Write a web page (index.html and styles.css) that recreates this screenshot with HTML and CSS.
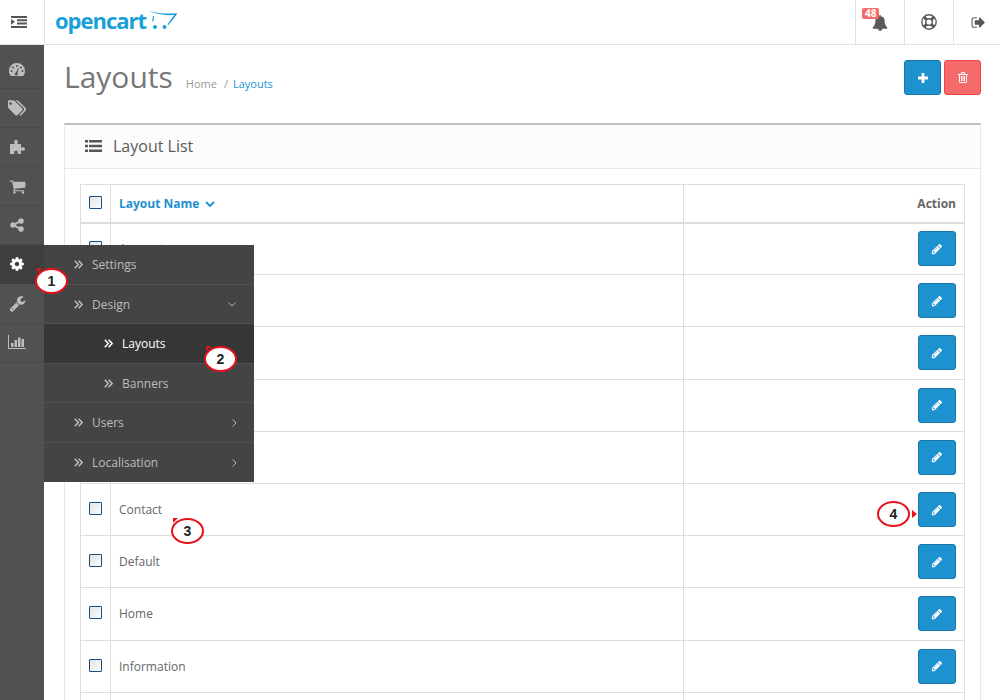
FILE: index.html
```html
<!DOCTYPE html>
<html lang="en">
<head>
<meta charset="utf-8">
<title>Layouts</title>
<link rel="stylesheet" href="styles.css">
</head>
<body>
<svg class="defs" width="0" height="0" aria-hidden="true">
  <symbol id="i-chev2" viewBox="0 0 9 9"><path d="M.8.800 4.300 4.500.8 8.200M4.600.800 8.100 4.500 4.600 8.200" fill="none" stroke="currentColor" stroke-width="1.500"/></symbol>
  <symbol id="i-pencil" viewBox="0 0 1792 1792"><path fill="currentColor" d="M491 1536l91-91-235-235-91 91v107h128v128h107zm523-928q0-22-22-22-10 0-17 7l-542 542q-7 7-7 17 0 22 22 22 10 0 17-7l542-542q7-7 7-17zm-54-192l416 416-832 832h-416v-416zm683 96q0 53-37 90l-166 166-416-416 166-165q36-38 90-38 53 0 91 38l235 234q37 39 37 91z"/></symbol>
</svg>

<header class="topbar">
  <button class="menu-toggle" aria-label="Toggle menu">
    <svg viewBox="0 0 16 12" width="16" height="12"><path fill="#555" d="M0 0h16v2H0zM6 3.300h10v2H6zM6 6.600h10v2H6zM0 10h16v2H0zM0 3l4 2.800L0 8.800z"/></svg>
  </button>
  <a class="logo">
    <span class="logo-text">opencart</span>
    <svg class="logo-cart" viewBox="0 0 28 19" width="28" height="19"><path fill="#1a9fd9" d="M0 0c8 2.200 17 3 27.500 2.300l.5 1L19.500 14l-1-.6 6.600-9.300C16 4.600 7 3 0 0z"/><path stroke="#1a9fd9" stroke-width="1.200" d="M4.500 5l-.7 5.500"/><circle cx="6" cy="16" r="2" fill="#1a9fd9"/><circle cx="15.500" cy="16" r="2" fill="#1a9fd9"/></svg>
  </a>
  <nav class="top-actions">
    <a class="top-action">
      <span class="badge">48</span>
      <svg viewBox="0 0 1792 1792" width="16" height="16"><path fill="#5a5a5a" d="M912 1696q0-16-16-16-59 0-101.500-42.500t-42.500-101.500q0-16-16-16t-16 16q0 73 51.500 124.500t124.500 51.500q16 0 16-16zm816-288q0 52-38 90t-90 38h-448q0 106-75 181t-181 75-181-75-75-181h-448q-52 0-90-38t-38-90q50-42 91-88t85-119.500 74.500-158.500 50-206 19.500-260q0-152 117-282.500t307-158.500q-8-19-8-39 0-40 28-68t68-28 68 28 28 68q0 20-8 39 190 28 307 158.500t117 282.500q0 139 19.500 260t50 206 74.500 158.500 85 119.500 91 88z"/></svg>
    </a>
    <a class="top-action">
      <svg viewBox="0 0 16 16" width="16" height="16"><circle cx="8" cy="8" r="7.200" fill="none" stroke="#5a5a5a" stroke-width="1.400"/><circle cx="8" cy="8" r="3.300" fill="none" stroke="#5a5a5a" stroke-width="1.400"/><path stroke="#5a5a5a" stroke-width="3" d="M3 3l2.800 2.800M13 3l-2.800 2.800M3 13l2.800-2.800M13 13l-2.800-2.800"/></svg>
    </a>
    <a class="top-action">
      <svg viewBox="0 0 1792 1792" width="15" height="15"><path fill="#555" d="M704 1440q0 4 1 20t.5 26.500-3 23.500-10 19.500-20.500 6.500h-320q-119 0-203.500-84.500t-84.500-203.500v-704q0-119 84.500-203.500t203.500-84.500h320q13 0 22.500 9.500t9.500 22.500q0 4 1 20t.5 26.500-3 23.500-10 19.500-20.500 6.500h-320q-66 0-113 47t-47 113v704q0 66 47 113t113 47h312l11.500 1 11.500 3 8 5.500 7 9 2 13.500zm928-544q0 26-19 45l-544 544q-19 19-45 19t-45-19-19-45v-288h-448q-26 0-45-19t-19-45v-384q0-26 19-45t45-19h448v-288q0-26 19-45t45-19 45 19l544 544q19 19 19 45z"/></svg>
    </a>
  </nav>
</header>

<div class="shell">
  <aside class="sidebar">
    <ul class="side-list">
      <li class="side-item side-first">
        <svg viewBox="0 0 16 13" width="16" height="13"><path fill="currentColor" fill-rule="evenodd" d="M8 0a8 8 0 0 1 8 8c0 1.700-.5 3.300-1.400 4.600a.8.8 0 0 1-.7.400H2.100a.8.800 0 0 1-.7-.4A8 8 0 0 1 8 0zM8 2a1 1 0 1 0 0 2 1 1 0 0 0 0-2zM4 3.500a1 1 0 1 0 0 2 1 1 0 0 0 0-2zM12 3.500a1 1 0 1 0 0 2 1 1 0 0 0 0-2zM2.500 7a1 1 0 1 0 0 2 1 1 0 0 0 0-2zM13.500 7a1 1 0 1 0 0 2 1 1 0 0 0 0-2zM9.300 5 7 9.500a1.500 1.500 0 1 0 1.500.5l1.300-4.800z"/></svg>
      </li>
      <li class="side-item">
        <svg viewBox="0 0 1792 1792" width="18" height="18"><path fill="currentColor" d="M384 448q0-53-37.500-90.500t-90.500-37.500-90.500 37.500-37.500 90.500 37.500 90.500 90.500 37.500 90.500-37.500 37.500-90.500zm1067 576q0 53-37 90l-491 492q-39 37-91 37-53 0-90-37l-715-716q-38-37-64.500-101t-26.500-117v-416q0-52 38-90t90-38h416q53 0 117 26.500t102 64.500l715 714q37 39 37 91zm384 0q0 53-37 90l-491 492q-39 37-91 37-36 0-59-14t-53-45l470-470q37-37 37-90 0-52-37-91l-715-714q-38-38-102-64.500t-117-26.500h224q53 0 117 26.500t102 64.500l715 714q37 39 37 91z"/></svg>
      </li>
      <li class="side-item">
        <svg viewBox="0 0 16 16" width="16" height="16"><path fill="currentColor" d="M1 5h4.200c.6 0 .5-.7.200-1.200C5 3 5.100 1 7 1s2 2 1.600 2.800C8.300 4.300 8.200 5 8.800 5H12v3.200c0 .6.700.5 1.200.2.800-.4 2.800-.3 2.800 1.600s-2 2-2.800 1.600c-.5-.3-1.200-.4-1.200.2V15H8.800c-.6 0-.5-.7-.2-1.200.4-.8.300-2-1.600-2s-2 1.200-1.600 2c.3.500.4 1.200-.2 1.200H1z"/></svg>
      </li>
      <li class="side-item">
        <svg viewBox="0 0 1792 1792" width="17" height="17"><path fill="currentColor" d="M704 1536q0 52-38 90t-90 38-90-38-38-90 38-90 90-38 90 38 38 90zm896 0q0 52-38 90t-90 38-90-38-38-90 38-90 90-38 90 38 38 90zm128-1088v512q0 24-16.500 42.500t-40.500 21.500l-1044 122q13 60 13 70 0 16-24 64h920q26 0 45 19t19 45-19 45-45 19h-1024q-26 0-45-19t-19-45q0-11 8-31.500t16-36 21.500-40 15.500-29.500l-177-823h-204q-26 0-45-19t-19-45 19-45 45-19h256q16 0 28.500 6.500t19.500 15.500 13 24.500 8 26 5.500 29.500 4.500 26h1201q26 0 45 19t19 45z"/></svg>
      </li>
      <li class="side-item">
        <svg viewBox="0 0 1792 1792" width="16" height="16"><path fill="currentColor" d="M1344 1024q133 0 226.500 93.500t93.500 226.500-93.500 226.500-226.500 93.500-226.500-93.500-93.500-226.500q0-12 2-34l-360-180q-92 86-218 86-133 0-226.500-93.500t-93.500-226.500 93.500-226.500 226.500-93.500q126 0 218 86l360-180q-2-22-2-34 0-133 93.500-226.500t226.500-93.500 226.500 93.500 93.500 226.500-93.500 226.500-226.500 93.500q-126 0-218-86l-360 180q2 22 2 34t-2 34l360 180q92-86 218-86z"/></svg>
      </li>
      <li class="side-item is-active">
        <svg class="cog" viewBox="0 0 1792 1792" width="16" height="16"><path fill="currentColor" d="M1152 896q0-106-75-181t-181-75-181 75-75 181 75 181 181 75 181-75 75-181zm512-109v222q0 12-8 23t-20 13l-185 28q-19 54-39 91 35 50 107 138 10 12 10 25t-9 23q-27 37-99 108t-94 71q-12 0-26-9l-138-108q-44 23-91 38-16 136-29 186-7 28-36 28h-222q-14 0-24.500-8.500t-11.500-21.500l-28-184q-49-16-90-37l-141 107q-10 9-25 9-14 0-25-11-126-114-165-168-7-10-7-23 0-12 8-23 15-21 51-66.500t54-70.500q-27-50-41-99l-183-27q-13-2-21-12.500t-8-23.500v-222q0-12 8-23t19-13l186-28q14-46 39-92-40-57-107-138-10-12-10-24 0-10 9-23 26-36 98.500-107.500t94.500-71.500q13 0 26 10l138 107q44-23 91-38 16-136 29-186 7-28 36-28h222q14 0 24.500 8.500t11.500 21.500l28 184q49 16 90 37l142-107q9-9 24-9 13 0 25 10 129 119 165 170 7 8 7 22 0 12-8 23-15 21-51 66.500t-54 70.500q26 50 41 98l183 28q13 2 21 12.500t8 23.500z"/></svg>
        <ul class="flyout">
          <li class="fly-row"><svg class="chev"><use href="#i-chev2"/></svg><span class="fly-label">Settings</span></li>
          <li class="fly-row"><svg class="chev"><use href="#i-chev2"/></svg><span class="fly-label">Design</span><svg class="caret" viewBox="0 0 8 5" width="8" height="5"><path d="M.5.700 4 4l3.500-3.300" fill="none" stroke="currentColor"/></svg></li>
          <li class="fly-row fly-sub is-current"><svg class="chev"><use href="#i-chev2"/></svg><span class="fly-label">Layouts</span></li>
          <li class="fly-row fly-sub"><svg class="chev"><use href="#i-chev2"/></svg><span class="fly-label">Banners</span></li>
          <li class="fly-row"><svg class="chev"><use href="#i-chev2"/></svg><span class="fly-label">Users</span><svg class="caret caret-right" viewBox="0 0 5 8" width="5" height="8"><path d="M.7.500 4 4 .7 7.500" fill="none" stroke="currentColor"/></svg></li>
          <li class="fly-row"><svg class="chev"><use href="#i-chev2"/></svg><span class="fly-label">Localisation</span><svg class="caret caret-right" viewBox="0 0 5 8" width="5" height="8"><path d="M.7.500 4 4 .7 7.500" fill="none" stroke="currentColor"/></svg></li>
        </ul>
      </li>
      <li class="side-item">
        <svg viewBox="0 0 1792 1792" width="17" height="17"><path fill="currentColor" d="M448 1472q0-26-19-45t-45-19-45 19-19 45 19 45 45 19 45-19 19-45zm644-420l-682 682q-37 37-90 37-52 0-91-37l-106-108q-38-36-38-90 0-53 38-91l681-681q39 98 114.500 173.500t173.500 114.500zm634-435q0 39-23 106-47 134-164.500 217.500t-258.500 83.500q-185 0-316.500-131.500t-131.500-316.500 131.500-316.500 316.500-131.500q58 0 121.500 16.500t107.500 46.500q16 11 16 28t-16 28l-293 169v224l193 107q5-3 79-48.500t135.500-81 70.500-35.500q15 0 23.500 10t8.500 25z"/></svg>
      </li>
      <li class="side-item side-last">
        <svg viewBox="0 0 18 14" width="18" height="14"><path fill="currentColor" d="M0 0h1v13h17v1H0zM3 8h2.500v4H3zM6.500 5H9v7H6.500zM10 2.500h2.500V12H10zM13.500 4H16v8h-2.500z"/></svg>
      </li>
    </ul>
  </aside>

  <main class="content">
    <div class="page-head">
      <div class="title-group">
        <h1 class="page-title">Layouts</h1>
        <ul class="crumbs">
          <li class="crumb">Home</li>
          <li class="crumb-sep">/</li>
          <li class="crumb crumb-current">Layouts</li>
        </ul>
      </div>
      <div class="page-actions">
        <button class="btn btn-primary btn-head" aria-label="Add"><svg viewBox="0 0 10 10" width="10" height="10"><path fill="#fff" d="M3.600 0h2.800v3.600H10v2.800H6.400V10H3.600V6.400H0V3.600h3.600z"/></svg></button>
        <button class="btn btn-danger btn-head" aria-label="Delete"><svg viewBox="0 0 10 11" width="10" height="11"><path fill="none" stroke="#fff" d="M1.500 2.500V10q0 .5.500.5h6q.5 0 .5-.5V2.500M0 2.500h10M3 2.500l.7-2h2.600l.7 2"/><path stroke="#fff" d="M3.500 4v5M5 4v5M6.500 4v5"/></svg></button>
      </div>
    </div>

    <section class="panel">
      <h2 class="panel-head">
        <svg viewBox="0 0 17 12" width="17" height="12"><path fill="#555" d="M0 0h3v2.500H0zM4 0h13v2.500H4zM0 4.700h3v2.600H0zM4 4.700h13v2.600H4zM0 9.500h3V12H0zM4 9.500h13V12H4z"/></svg>
        <span>Layout List</span>
      </h2>
      <div class="panel-body">
        <table class="grid">
          <thead>
            <tr>
              <th class="col-check"><input type="checkbox" class="check"></th>
              <th class="col-name"><a class="sort-link">Layout Name <svg viewBox="0 0 10 7" width="10" height="7"><path d="M1 1l4 4 4-4" fill="none" stroke="currentColor" stroke-width="1.900"/></svg></a></th>
              <th class="col-action">Action</th>
            </tr>
          </thead>
          <tbody>
            <tr><td class="col-check"><input type="checkbox" class="check"></td><td>Account</td><td class="col-action"><button class="btn btn-primary" aria-label="Edit"><svg class="pen"><use href="#i-pencil"/></svg></button></td></tr>
            <tr><td class="col-check"><input type="checkbox" class="check"></td><td>Affiliate</td><td class="col-action"><button class="btn btn-primary" aria-label="Edit"><svg class="pen"><use href="#i-pencil"/></svg></button></td></tr>
            <tr><td class="col-check"><input type="checkbox" class="check"></td><td>Category</td><td class="col-action"><button class="btn btn-primary" aria-label="Edit"><svg class="pen"><use href="#i-pencil"/></svg></button></td></tr>
            <tr><td class="col-check"><input type="checkbox" class="check"></td><td>Checkout</td><td class="col-action"><button class="btn btn-primary" aria-label="Edit"><svg class="pen"><use href="#i-pencil"/></svg></button></td></tr>
            <tr><td class="col-check"><input type="checkbox" class="check"></td><td>Compare</td><td class="col-action"><button class="btn btn-primary" aria-label="Edit"><svg class="pen"><use href="#i-pencil"/></svg></button></td></tr>
            <tr><td class="col-check"><input type="checkbox" class="check"></td><td>Contact</td><td class="col-action"><button class="btn btn-primary" aria-label="Edit"><svg class="pen"><use href="#i-pencil"/></svg></button></td></tr>
            <tr><td class="col-check"><input type="checkbox" class="check"></td><td>Default</td><td class="col-action"><button class="btn btn-primary" aria-label="Edit"><svg class="pen"><use href="#i-pencil"/></svg></button></td></tr>
            <tr><td class="col-check"><input type="checkbox" class="check"></td><td>Home</td><td class="col-action"><button class="btn btn-primary" aria-label="Edit"><svg class="pen"><use href="#i-pencil"/></svg></button></td></tr>
            <tr><td class="col-check"><input type="checkbox" class="check"></td><td>Information</td><td class="col-action"><button class="btn btn-primary" aria-label="Edit"><svg class="pen"><use href="#i-pencil"/></svg></button></td></tr>
            <tr><td class="col-check"></td><td></td><td class="col-action"></td></tr>
          </tbody>
        </table>
      </div>
    </section>
  </main>
</div>

<span class="callout c1">1</span>
<span class="callout c2">2</span>
<span class="callout c3">3</span>
<span class="callout c4">4</span>
</body>
</html>
```

FILE: styles.css
```css
* { box-sizing: border-box; }
html, body { margin: 0; height: 700px; overflow: hidden; }
body {
  position: relative;
  font-family: "Open Sans", sans-serif;
  font-size: 12px;
  color: #666;
  background: #fff;
}
ul { list-style: none; margin: 0; padding: 0; }
.defs { position: absolute; }

/* top bar */
.topbar {
  display: flex;
  align-items: stretch;
  height: 45px;
  background: #fff;
  border-bottom: 1px solid #e1e1e1;
}
.menu-toggle {
  width: 45px;
  padding: 0 6px 0 0;
  border: 0;
  border-right: 1px solid #e1e1e1;
  background: #fff;
  display: flex;
  align-items: center;
  justify-content: center;
}
.logo {
  display: flex;
  align-items: flex-start;
  padding-left: 10px;
}
.logo-text {
  font-family: "Open Sans", sans-serif;
  font-weight: 700;
  font-size: 22px;
  line-height: 40px;
  letter-spacing: -1px;
  color: #1a9fd9;
}
.logo-cart { margin: 11px 0 0 3px; }
.top-actions { display: flex; margin-left: auto; margin-right: -2px; }
.top-action {
  position: relative;
  width: 49px;
  display: flex;
  align-items: center;
  justify-content: center;
  border-left: 1px solid #e1e1e1;
}
.top-action:first-child svg { margin: 2px 0 0 -1px; }
.badge {
  position: absolute;
  top: 8px;
  left: 6px;
  height: 11px;
  padding: 0 3px;
  border-radius: 2px;
  background: #f56b6b;
  color: #fff;
  font-size: 10px;
  font-weight: 700;
  line-height: 11px;
}

/* shell */
.shell { display: flex; height: 655px; }
.sidebar { width: 44px; flex: none; background: #515151; }
.side-item {
  position: relative;
  height: 39.100px;
  padding-right: 10px;
  display: flex;
  align-items: center;
  justify-content: center;
  color: #bdbdbd;
  border-bottom: 1px solid #484848;
}
.side-first { height: 44px; padding-top: 6px; }
.side-last svg { margin-top: -2px; }
.side-item.is-active { background: #3f3f3f; color: #fff; border-bottom-color: #3f3f3f; }

/* flyout */
.flyout {
  position: absolute;
  top: 0;
  left: 44px;
  width: 210px;
  background: #444;
  z-index: 5;
}
.fly-row {
  display: flex;
  align-items: center;
  height: 39.500px;
  padding-left: 30px;
  padding-right: 17px;
  color: #bdbdbd;
  font-size: 12px;
  border-bottom: 1px solid #515151;
}
.fly-row:last-child { border-bottom: 0; }
.fly-sub { padding-left: 60px; }
.fly-row.is-current { background: #363636; color: #fff; }
.chev { width: 9px; height: 9px; flex: none; }
.fly-label { margin-left: 9px; }
.caret { margin-left: auto; flex: none; margin-right: 1px; }
.caret-right { margin-right: 0; }

/* content */
.content { flex: 1; min-width: 0; padding: 0 19px 0 20px; overflow: hidden; }
.page-head {
  display: flex;
  justify-content: space-between;
  align-items: flex-start;
  height: 78px;
  padding-top: 14px;
}
.title-group { display: flex; align-items: baseline; }
.page-title {
  margin: 0;
  font-size: 30px;
  font-weight: 400;
  line-height: 36px;
  color: #777;
}
.crumbs { display: flex; margin-left: 13px; font-size: 11px; color: #999; }
.crumb-sep { margin: 0 5px 0 7px; }
.crumb-current { color: #1e91cf; }
.page-actions { display: flex; gap: 3px; margin-top: 1px; }

.btn {
  width: 38px;
  height: 35px;
  padding: 0;
  display: inline-flex;
  align-items: center;
  justify-content: center;
  border-radius: 3px;
  border: 1px solid;
  vertical-align: middle;
}
.btn-head { width: 37px; }
.btn-primary { background: #1e91cf; border-color: #1978ab; color: #fff; }
.btn-danger { background: #f56b6b; border-color: #f24545; }
.pen { width: 12px; height: 12px; }

/* panel */
.panel {
  border: 1px solid #e7e7e7;
  border-top: 2px solid #bfbfbf;
}
.panel-head {
  margin: 0;
  height: 44px;
  padding: 0 0 2px 20px;
  display: flex;
  align-items: center;
  gap: 11px;
  background: #fcfcfc;
  border-bottom: 1px solid #e8e8e8;
  font-size: 16px;
  font-weight: 400;
  color: #595959;
}
.panel-body { padding: 15px 15px 0; }

/* table */
.grid { width: 100%; border-collapse: collapse; table-layout: fixed; font-size: 12px; }
.grid th, .grid td {
  border: 1px solid #ddd;
  padding: 0 8px;
  height: 52.200px;
  text-align: left;
  font-weight: 400;
}
.grid thead th { height: 38px; border-bottom-width: 2px; font-weight: 700; }
.grid .col-check { width: 30px; text-align: center; padding: 0; }
.grid th:nth-child(2) { width: 573px; }
.grid .col-action { text-align: right; color: #666; }
.sort-link { color: #1e91cf; }
.sort-link svg { margin-left: 2px; }
.check {
  appearance: none;
  display: block;
  width: 13px;
  height: 13px;
  margin: -2px auto 0;
  border: 1px solid #1d4c7d;
  border-radius: 1px;
  background: linear-gradient(135deg, #e4e4e4, #fbfbfb);
}

/* annotation callouts */
.callout {
  position: absolute;
  width: 33px;
  height: 26px;
  display: flex;
  align-items: center;
  justify-content: center;
  background: #fff;
  border: 2.500px solid #e8101a;
  border-radius: 50%;
  color: #222;
  font-family: "Liberation Sans", sans-serif;
  font-size: 14px;
  font-weight: 700;
  z-index: 10;
}
.callout::before {
  content: "";
  position: absolute;
  border-style: solid;
}
.c1 { left: 35px; top: 268px; }
.c2 { left: 204px; top: 346px; }
.c3 { left: 171px; top: 518px; }
.c4 { left: 877px; top: 501px; }
.c1::before, .c2::before, .c3::before {
  left: 0;
  top: -2px;
  border-width: 5px 5px 0 0;
  border-color: #e8101a transparent transparent transparent;
}
.c4::before {
  right: -9px;
  top: 7px;
  border-width: 4px 0 4px 5px;
  border-color: transparent transparent transparent #e8101a;
}
```
